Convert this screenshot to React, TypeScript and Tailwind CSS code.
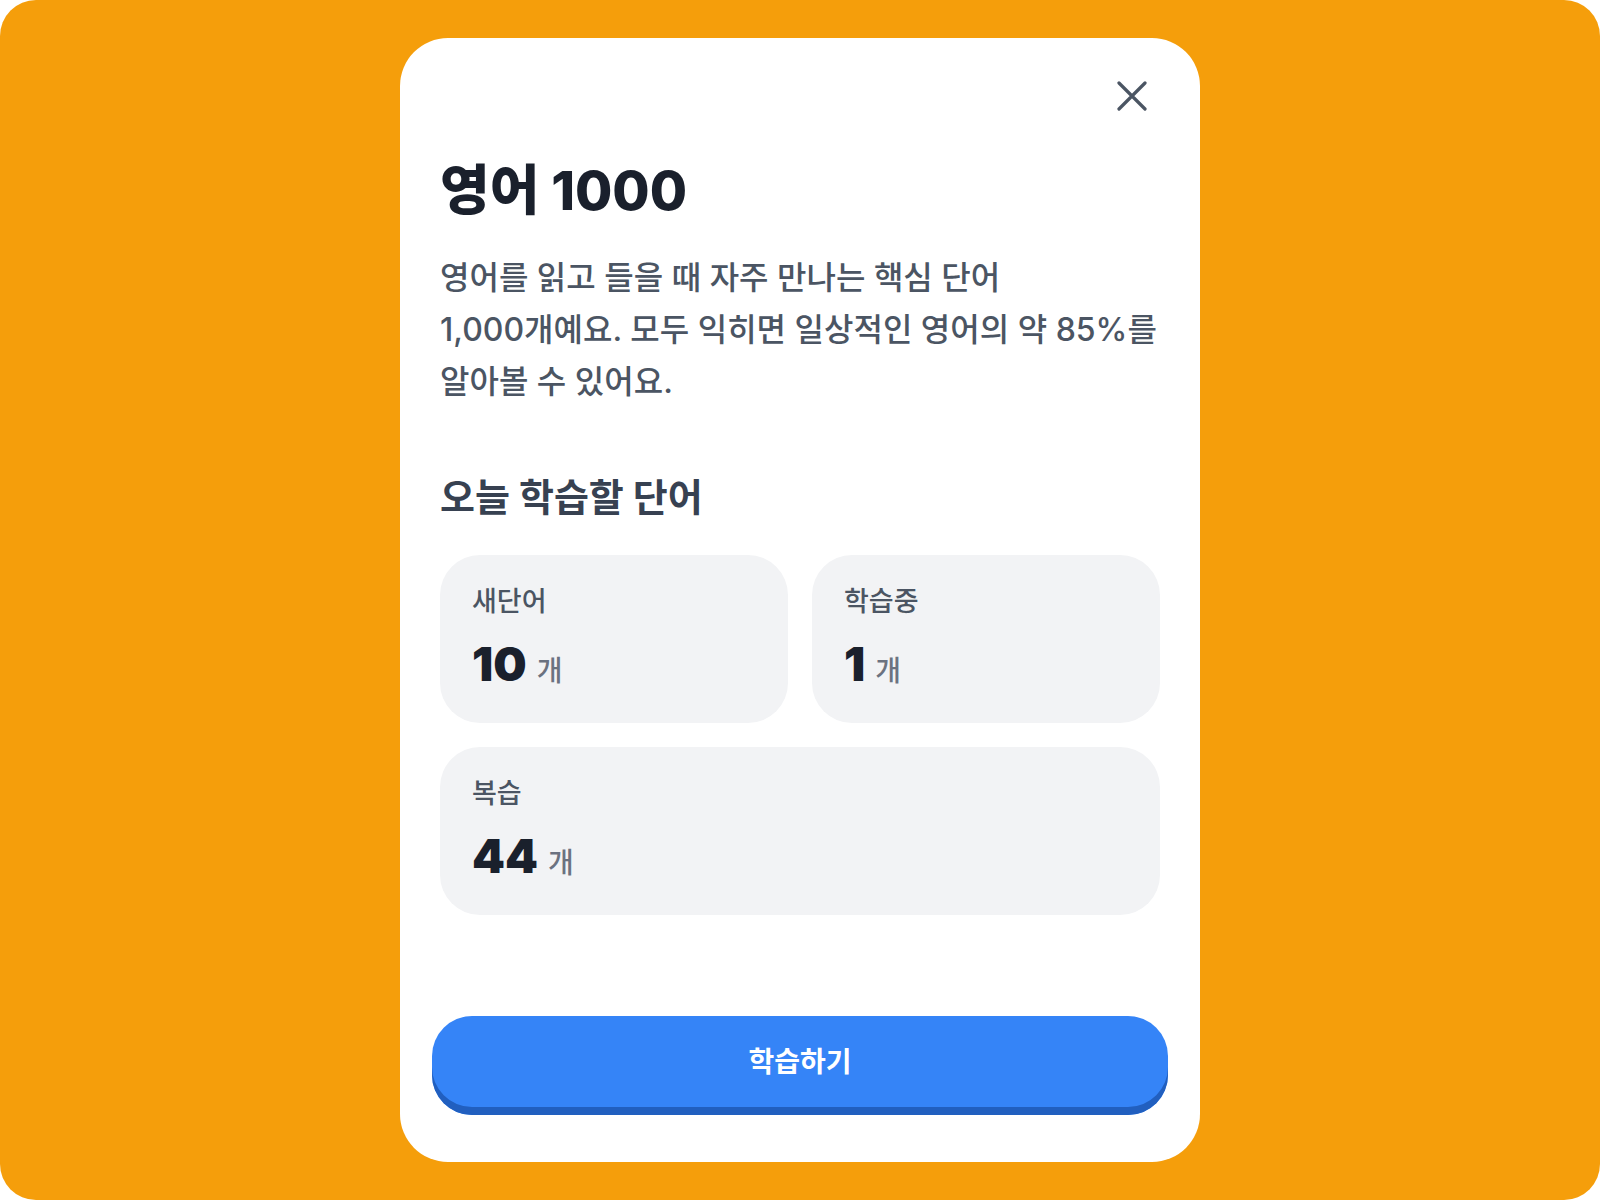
const font = { fontFamily: 'Inter, "Noto Sans CJK KR", sans-serif' };

function StatCard({ label, count, wide }: { label: string; count: string; wide?: boolean }) {
  return (
    <div
      className={`bg-[#f2f3f5] rounded-[40px] h-[168px] px-8 pt-[29px] ${wide ? "col-span-2" : ""}`}
    >
      <p className="text-[27px] leading-[36px] font-medium text-[#4b5563]">{label}</p>
      <div className="flex items-baseline gap-[10px] mt-[19px]">
        <span className="text-[47px] leading-[50px] font-black text-[#1a202c]">{count}</span>
        <span className="text-[28px] font-medium text-[#6b7280]">개</span>
      </div>
    </div>
  );
}

export default function App() {
  return (
    <div className="w-[1600px] h-[1200px] bg-white" style={font}>
      <div className="w-full h-full bg-[#f59e0b] rounded-[36px] flex justify-center pt-[38px]">
        <div className="relative w-[800px] h-[1124px] bg-white rounded-[48px] flex flex-col px-10 pt-[117px]">
          {/* close */}
          <button className="absolute top-[43px] right-[53px] text-[#4b5563]">
            <svg width="30" height="30" viewBox="0 0 30 30" fill="none" className="block">
              <path
                d="M2 2 L28 28 M28 2 L2 28"
                stroke="currentColor"
                strokeWidth="3.2"
                strokeLinecap="round"
              />
            </svg>
          </button>

          <h1 className="text-[54px] leading-[72px] font-extrabold text-[#1a202c]">영어 1000</h1>
          <p className="mt-[25px] text-[32px] leading-[52px] font-medium text-[#4b5563]">
            영어를 읽고 들을 때 자주 만나는 핵심 단어
            <br />
            1,000개예요. 모두 익히면 일상적인 영어의 약 85%를
            <br />
            알아볼 수 있어요.
          </p>

          <h2 className="mt-[65px] text-[38px] leading-[48px] font-bold text-[#374151]">
            오늘 학습할 단어
          </h2>

          <div className="grid grid-cols-2 gap-6 mt-[34px]">
            <StatCard label="새단어" count="10" />
            <StatCard label="학습중" count="1" />
            <StatCard label="복습" count="44" wide />
          </div>

          <div className="mt-auto mb-[47px] -mx-2">
            <button className="w-full h-[99px] rounded-[40px] bg-[#3584f7] shadow-[inset_0_-8px_0_#215fbf] text-white text-[28px] font-bold pb-2">
              학습하기
            </button>
          </div>
        </div>
      </div>
    </div>
  );
}
